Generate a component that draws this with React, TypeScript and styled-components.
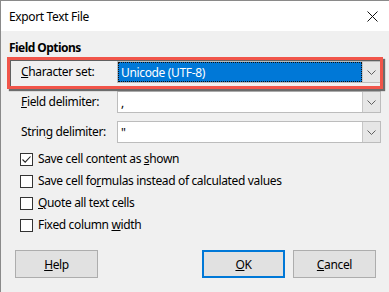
import React from "react";
import styled, { createGlobalStyle } from "styled-components";

const GlobalStyle = createGlobalStyle`
  html, body { margin: 0; padding: 0; background: #f0f0f0; }
  body {
    font-family: "Noto Sans", "Liberation Sans", sans-serif;
    font-size: 12px;
    letter-spacing: -0.35px;
    color: #000;
  }
`;

const Window = styled.div`
  position: relative;
  width: 389px;
  height: 292px;
  box-sizing: border-box;
  border-left: 1px solid #8a8a8a;
  border-top: 1px solid #8a8a8a;
  background: #f0f0f0;
  display: flex;
  flex-direction: column;
  overflow: hidden;
`;

const TitleBar = styled.div`
  height: 30px;
  background: #fff;
  display: flex;
  align-items: center;
  justify-content: space-between;
  padding: 0 11px 0 8px;
  flex: none;
`;

const Title = styled.span`
  font-size: 12px;
  color: #000;
`;

const Content = styled.div`
  padding: 9px 0 0 8px;
  display: flex;
  flex-direction: column;
`;

const SectionTitle = styled.div`
  font-weight: bold;
  letter-spacing: -0.55px;
  line-height: 16px;
  height: 16px;
`;

const Fields = styled.div`
  display: flex;
  flex-direction: column;
  gap: 8px;
  margin-top: 5px;
  padding-left: 12px;
`;

const Row = styled.div`
  display: grid;
  grid-template-columns: 96px 264px;
  align-items: center;
  height: 22px;
`;

const Label = styled.span`
  line-height: 16px;
`;

const Combo = styled.div`
  display: flex;
  height: 22px;
  box-sizing: border-box;
  border: 1px solid #bcbcbc;
  background: #fff;
`;

const ComboValue = styled.div<{ $selected?: boolean }>`
  flex: 1;
  display: flex;
  align-items: center;
  padding-left: 3px;
  box-sizing: border-box;
  background: ${(p) => (p.$selected ? "#0078d7" : "#fff")};
  color: ${(p) => (p.$selected ? "#fff" : "#000")};
  outline: ${(p) => (p.$selected ? "1px dotted #111" : "none")};
  outline-offset: -1px;
`;

const ComboButton = styled.div`
  width: 17px;
  flex: none;
  display: flex;
  align-items: center;
  justify-content: center;
  background: #e6e6e6;
  border-left: 1px solid #c6c6c6;
`;

const Checks = styled.div`
  display: flex;
  flex-direction: column;
  margin-top: 5px;
  padding-left: 11px;
`;

const CheckRow = styled.div`
  display: flex;
  align-items: center;
  height: 22px;
  gap: 5px;
`;

const Box = styled.div`
  width: 13px;
  height: 13px;
  box-sizing: border-box;
  border: 1px solid #333;
  background: #fff;
  display: flex;
  align-items: center;
  justify-content: center;
`;

const Footer = styled.div`
  margin-top: auto;
  display: flex;
  align-items: center;
  padding: 0 13px 14px 14px;
  gap: 8px;
`;

const Spacer = styled.div`
  flex: 1;
`;

const Button = styled.div<{ $default?: boolean }>`
  width: 83px;
  height: 28px;
  box-sizing: border-box;
  display: flex;
  align-items: center;
  justify-content: center;
  background: #e1e1e1;
  border: ${(p) => (p.$default ? "2px solid #0078d7" : "1px solid #adadad")};
`;

const Highlight = styled.div`
  position: absolute;
  left: 6px;
  top: 56px;
  width: 376px;
  height: 32px;
  box-sizing: border-box;
  border: 3px solid #f1554a;
  box-shadow: 2px 2px 1px rgba(0, 0, 0, 0.55), inset 1px 1px 0 rgba(0, 0, 0, 0.6);
  pointer-events: none;
`;

const Chevron = () => (
  <svg width="9" height="5" viewBox="0 0 9 5">
    <path d="M0.5 0.5 L4.5 4.5 L8.5 0.5" fill="none" stroke="#606060" strokeWidth="1" />
  </svg>
);

const Check = () => (
  <svg width="11" height="11" viewBox="0 0 11 11">
    <path d="M1.5 5.5 L4.2 8.2 L9.5 2.5" fill="none" stroke="#222" strokeWidth="1.1" />
  </svg>
);

const CloseIcon = () => (
  <svg width="11" height="11" viewBox="0 0 11 11">
    <path d="M0.5 0.5 L10.5 10.5 M10.5 0.5 L0.5 10.5" stroke="#111" strokeWidth="1" />
  </svg>
);

const U = ({ children }: { children: React.ReactNode }) => (
  <span style={{ textDecoration: "underline" }}>{children}</span>
);

const ComboBox = ({ value, selected }: { value: string; selected?: boolean }) => (
  <Combo>
    <ComboValue $selected={selected}>{value}</ComboValue>
    <ComboButton>
      <Chevron />
    </ComboButton>
  </Combo>
);

const CheckItem = ({ checked, children }: { checked?: boolean; children: React.ReactNode }) => (
  <CheckRow>
    <Box>{checked && <Check />}</Box>
    <Label>{children}</Label>
  </CheckRow>
);

export default function App() {
  return (
    <>
      <GlobalStyle />
      <Window>
        <TitleBar>
          <Title>Export Text File</Title>
          <CloseIcon />
        </TitleBar>
        <Content>
          <SectionTitle>Field Options</SectionTitle>
          <Fields>
            <Row>
              <Label>
                <U>C</U>haracter set:
              </Label>
              <ComboBox value="Unicode (UTF-8)" selected />
            </Row>
            <Row>
              <Label>
                <U>F</U>ield delimiter:
              </Label>
              <ComboBox value="," />
            </Row>
            <Row>
              <Label>
                Strin<U>g</U> delimiter:
              </Label>
              <ComboBox value={'"'} />
            </Row>
          </Fields>
          <Checks>
            <CheckItem checked>
              Save cell content as <U>s</U>hown
            </CheckItem>
            <CheckItem>
              Save cell fo<U>r</U>mulas instead of calculated values
            </CheckItem>
            <CheckItem>
              <U>Q</U>uote all text cells
            </CheckItem>
            <CheckItem>
              Fixed column <U>w</U>idth
            </CheckItem>
          </Checks>
        </Content>
        <Footer>
          <Button>
            <span>
              <U>H</U>elp
            </span>
          </Button>
          <Spacer />
          <Button $default>
            <span>
              <U>O</U>K
            </span>
          </Button>
          <Button>
            <span>
              <U>C</U>ancel
            </span>
          </Button>
        </Footer>
        <Highlight />
      </Window>
    </>
  );
}
